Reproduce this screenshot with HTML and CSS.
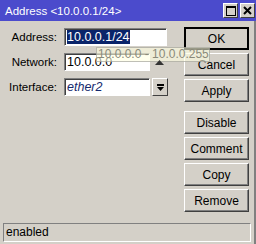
FILE: index.html
```html
<!DOCTYPE html>
<html lang="en">
<head>
    <meta charset="UTF-8">
    <title>Address &lt;10.0.0.1/24&gt;</title>
    <link rel="stylesheet" href="styles.css">
</head>
<body>

    <div class="window">
        <div class="titlebar">
            <span class="title">Address &lt;10.0.0.1/24&gt;</span>
            <div class="title-btns">
                <span class="tbtn">
                    <svg width="10" height="10" viewBox="0 0 10 10"><rect x="0.5" y="0.5" width="9" height="9" fill="none" stroke="#000"/><rect x="0" y="0" width="10" height="2" fill="#000"/></svg>
                </span>
                <span class="tbtn">
                    <svg width="9" height="9" viewBox="0 0 9 9"><path d="M1 1 L8 8 M8 1 L1 8" stroke="#000" stroke-width="2"/></svg>
                </span>
            </div>
        </div>

        <div class="content">
            <div class="form">
                <div class="row">
                    <label>Address:</label>
                    <div class="field field-wide"><span class="selected">10.0.0.1/24</span></div>
                </div>
                <div class="row">
                    <label>Network:</label>
                    <div class="field">10.0.0.0</div>
                </div>
                <div class="row">
                    <label>Interface:</label>
                    <div class="field field-italic">ether2</div>
                    <span class="drop-btn">
                        <svg width="9" height="9" viewBox="0 0 9 9"><rect x="1" y="1" width="7" height="2" fill="#000"/><path d="M1 4 L8 4 L4.5 8 Z" fill="#000"/></svg>
                    </span>
                </div>
            </div>

            <div class="buttons">
                <span class="btn btn-default">OK</span>
                <span class="btn">Cancel</span>
                <span class="btn">Apply</span>
                <span class="btn btn-gap">Disable</span>
                <span class="btn">Comment</span>
                <span class="btn">Copy</span>
                <span class="btn">Remove</span>
            </div>
        </div>

        <div class="status">enabled</div>

        <div class="tooltip">10.0.0.0 - 10.0.0.255</div>
        <svg class="pointer" width="9" height="5" viewBox="0 0 9 5"><path d="M0 5 L4.5 0 L9 5 Z" fill="#333"/></svg>
    </div>

</body>
</html>
```
FILE: styles.css
```css
body {
    margin: 0;
    background: #d4d0c8;
    font-family: Tahoma, 'DejaVu Sans', 'Liberation Sans', sans-serif;
    font-size: 11px;
    color: #000;
}

.window {
    position: relative;
    width: 256px;
    height: 244px;
    box-sizing: border-box;
    background: #d4d0c8;
    border-right: 2px solid #808080;
}

.titlebar {
    height: 21px;
    background: #4b4bcc;
    display: flex;
    align-items: center;
    justify-content: space-between;
    padding: 0 1px 0 5px;
    margin-right: -2px;
}

.title {
    color: #fff;
    font-family: 'Liberation Sans', Arial, sans-serif;
    font-size: 11.5px;
}

.title-btns {
    display: flex;
    gap: 2px;
}

.tbtn {
    width: 15px;
    height: 15px;
    box-sizing: border-box;
    background: #d4d0c8;
    border: 1px solid;
    border-color: #fff #404040 #404040 #fff;
    display: flex;
    align-items: center;
    justify-content: center;
}

.content {
    display: flex;
    justify-content: space-between;
    padding: 6px 5px 0 0;
    height: 195px;
}

.form {
    padding-top: 1px;
}

.row {
    display: flex;
    align-items: center;
    height: 18px;
    margin-bottom: 7px;
}

.row label {
    width: 57px;
    text-align: right;
    margin-right: 7px;
    font-family: 'Liberation Sans', Arial, sans-serif;
    font-size: 11.5px;
}

.field {
    width: 86px;
    height: 18px;
    box-sizing: border-box;
    background: #fff;
    border: 1px solid;
    border-color: #808080 #fff #fff #808080;
    box-shadow: inset 1px 1px 0 #404040;
    padding: 1px 0 0 2px;
    font-family: 'Liberation Sans', Arial, sans-serif;
    font-size: 12.5px;
    line-height: 15px;
}

.field-wide {
    width: 103px;
}

.field-italic {
    font-style: italic;
    color: #14286e;
}

.selected {
    background: #0a246a;
    color: #fff;
}

.drop-btn {
    width: 16px;
    height: 18px;
    margin-left: 2px;
    box-sizing: border-box;
    border: 1px solid;
    border-color: #fff #404040 #404040 #fff;
    display: flex;
    align-items: center;
    justify-content: center;
}

.buttons {
    display: flex;
    flex-direction: column;
    gap: 3px;
}

.btn {
    width: 65px;
    height: 23px;
    box-sizing: border-box;
    border: 1px solid;
    border-color: #fff #404040 #404040 #fff;
    box-shadow: inset -1px -1px 0 #808080;
    display: flex;
    align-items: center;
    justify-content: center;
    font-family: 'Liberation Sans', Arial, sans-serif;
    font-size: 12px;
}

.btn-default {
    border: 2px solid #000;
    box-shadow: none;
}

.btn-gap {
    margin-top: 6px;
}

.status {
    margin: 1px 3px 0 3px;
    height: 19px;
    box-sizing: border-box;
    border: 1px solid;
    border-color: #808080 #fff #fff #808080;
    padding: 0 2px;
    line-height: 17px;
    font-family: 'Liberation Sans', Arial, sans-serif;
    font-size: 12px;
}

.tooltip {
    position: absolute;
    left: 96px;
    top: 47px;
    width: 114px;
    height: 15px;
    box-sizing: border-box;
    background: rgba(255, 255, 225, 0.6);
    border: 1px solid rgba(128, 128, 128, 0.5);
    color: #8a8a7a;
    font-family: 'Liberation Sans', Arial, sans-serif;
    font-size: 12px;
    line-height: 13px;
    padding-left: 1px;
    white-space: nowrap;
    overflow: hidden;
}

.pointer {
    position: absolute;
    left: 155px;
    top: 60px;
}
```
